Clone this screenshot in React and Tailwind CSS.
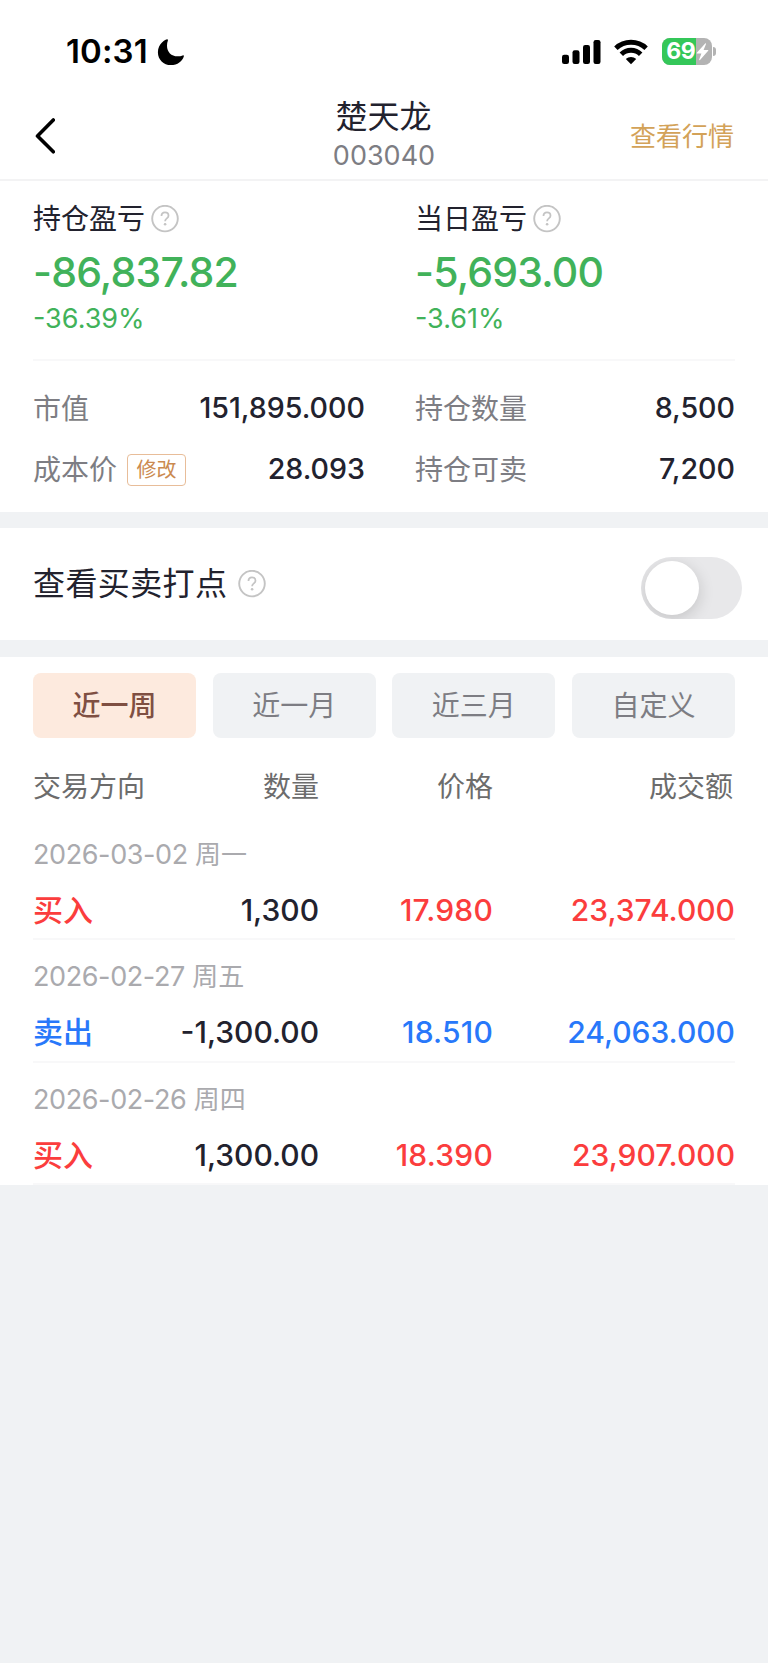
import React, { useState } from 'react';

const stats = [
  { label: '持仓盈亏', value: '-86,837.82', percent: '-36.39%' },
  { label: '当日盈亏', value: '-5,693.00', percent: '-3.61%' },
];

const ranges = ['近一周', '近一月', '近三月', '自定义'];

const trades = [
  { date: '2026-03-02', weekday: '周一', side: '买入', amount: '1,300', price: '17.980', total: '23,374.000' },
  { date: '2026-02-27', weekday: '周五', side: '卖出', amount: '-1,300.00', price: '18.510', total: '24,063.000' },
  { date: '2026-02-26', weekday: '周四', side: '买入', amount: '1,300.00', price: '18.390', total: '23,907.000' },
];

const HelpIcon = () => (
  <svg className="w-7 h-7 shrink-0" viewBox="0 0 28 28" fill="none" stroke="#c4c4c4" strokeWidth="1.9">
    <circle cx="14" cy="13.6" r="12.8" />
    <path d="M10.5 11.1c0-2.300 1.500-3.700 3.500-3.700s3.500 1.300 3.500 3.300c0 2.700-3.400 2.700-3.400 5.500" strokeWidth="1.8" />
    <circle cx="14.1" cy="19.2" r="1.3" fill="#c4c4c4" stroke="none" />
  </svg>
);

const StatusBar = () => (
  <div className="h-[90px] pt-[13px] pl-[66px] pr-[52px] flex items-center justify-between text-black">
    <div className="flex items-center gap-[9px]">
      <span className="pb-0.5 text-[33px] leading-[40px] font-semibold tracking-[0.1px]">10:31</span>
      <svg className="w-[28px] h-[28px]" viewBox="0 0 28 28">
        <path d="M10.2 1.2C9.6 .8 0.9 5 .9 14.2c0 7.4 5.6 12.9 13 12.9 6.600 0 11.500-4 12.900-8.700.2-.8-.4-1.300-1.100-1-1.600.7-3.300.9-5 .9-6.500 0-10.700-4.300-10.700-10.600 0-2 .3-3.700.9-5.200.2-.6 0-1.100-.7-1.300z" fill="currentColor" />
      </svg>
    </div>
    <div className="flex items-center">
      <svg className="w-[39px] h-[26px]" viewBox="0 0 39 26" fill="currentColor">
        <rect x="0" y="15.8" width="7" height="9.2" rx="2.2" />
        <rect x="10.500" y="11.2" width="7" height="13.800" rx="2.2" />
        <rect x="21" y="6" width="7" height="19" rx="2.2" />
        <rect x="31.500" y="1" width="7" height="24" rx="2.2" />
      </svg>
      <svg className="w-[34px] h-[26px] ml-[13px]" viewBox="0 0 34 26" fill="none" stroke="currentColor" strokeWidth="4.900">
        <path d="M1.900 9.200C10.200 1.200 23.800 1.200 32.100 9.200" />
        <path d="M7.300 15.200c5.400-5.300 14-5.300 19.400 0" />
        <path d="M17 25.200l-5.200-5.300c2.900-2.700 7.500-2.700 10.400 0z" fill="currentColor" stroke="none" />
      </svg>
      <div className="ml-[14px] w-[50px] h-[27px] rounded-[8px] overflow-hidden flex bg-[#b3b3b3] text-white">
        <div className="w-[34px] h-full bg-[#34c759] flex items-center justify-end">
          <span className="text-[23px] leading-[27px] font-bold tracking-[-0.3px]">69</span>
        </div>
        <svg className="w-[13px] h-[27px]" viewBox="0 0 13 27" fill="currentColor">
          <path d="M9.200 5.500L.8 14.800c-.3.400-.1.800.3.800h4.300L3.200 21.600c-.2.700.4 1 .8.500l8.200-9.400c.3-.4.1-.8-.3-.8H7.600L10 6c.2-.7-.4-1-.8-.5z" />
        </svg>
      </div>
      <div className="ml-[1.500px] w-[3px] h-[9px] rounded-r-full bg-[#b3b3b3]" />
    </div>
  </div>
);

const App = () => {
  const [range, setRange] = useState('近一周');
  const [showMarks, setShowMarks] = useState(false);

  return (
    <div className="w-full min-h-[1663px] bg-[#f0f2f4] text-[#22222e] font-['Inter','Noto_Sans_CJK_SC',sans-serif]">
      <div className="bg-white">
        <StatusBar />

        {/* Title bar */}
        <div className="h-[91px] border-b-2 border-[#f3f3f4] px-[33px] grid grid-cols-3 items-center">
          <svg className="mt-[3px] w-[22px] h-[36px]" viewBox="0 0 22 36" fill="none" stroke="#000" strokeWidth="3.600" strokeLinecap="round" strokeLinejoin="round">
            <path d="M20.300 2L4.500 18l15.800 15.800" />
          </svg>
          <div className="flex flex-col items-center">
            <h1 className="pr-px text-[32px] leading-[42px] font-normal">楚天龙</h1>
            <span className="text-[27px] leading-[35px] text-[#7d7d83]">003040</span>
          </div>
          <a className="mt-1 pr-px text-[26px] leading-[36px] text-right text-[#d3a258]">查看行情</a>
        </div>

        {/* Profit and loss */}
        <div className="px-[33px]">
          <div className="h-[180px] pt-[18px] flex border-b-2 border-[#f8f8f9]">
            {stats.map((s) => (
              <div key={s.label} className="first:w-[382px]">
                <div className="flex items-center gap-[6px] h-[40px]">
                  <span className="text-[28px] leading-[40px]">{s.label}</span>
                  <HelpIcon />
                </div>
                <p className="h-[66px] text-[41px] leading-[66px] font-medium tracking-[-0.8px] text-[#41b25a]">{s.value}</p>
                <p className="text-[27px] leading-[28px] text-[#41b25a]">{s.percent}</p>
              </div>
            ))}
          </div>

          <div className="h-[151px] pt-[17px] flex gap-[50px]">
            <div className="w-[332px]">
              <div className="h-[61px] flex items-center justify-between">
                <span className="text-[28px] text-[#7d7d83]">市值</span>
                <span className="text-[28.600px] font-medium">151,895.000</span>
              </div>
              <div className="h-[61px] flex items-center">
                <span className="text-[28px] text-[#7d7d83]">成本价</span>
                <button className="ml-[10px] w-[59px] h-[32px] rounded border border-[#e8bd99] text-[20px] leading-[30px] text-[#cb8a50]">修改</button>
                <span className="ml-auto text-[28.600px] font-medium">28.093</span>
              </div>
            </div>
            <div className="flex-1">
              <div className="h-[61px] flex items-center justify-between">
                <span className="text-[28px] text-[#7d7d83]">持仓数量</span>
                <span className="text-[28.600px] font-medium">8,500</span>
              </div>
              <div className="h-[61px] flex items-center justify-between">
                <span className="text-[28px] text-[#7d7d83]">持仓可卖</span>
                <span className="text-[28.600px] font-medium">7,200</span>
              </div>
            </div>
          </div>
        </div>
      </div>

      {/* Trade marks switch */}
      <div className="mt-4 h-[112px] bg-white pl-[33px] pr-[26px] flex items-center justify-between">
        <div className="flex items-center gap-[11px]">
          <span className="text-[32px] leading-[44px] tracking-[0.400px]">查看买卖打点</span>
          <HelpIcon />
        </div>
        <button
          onClick={() => setShowMarks(!showMarks)}
          className={`mt-2 w-[101px] h-[62px] p-1 rounded-full overflow-hidden flex items-center ${showMarks ? 'justify-end bg-[#34c759]' : 'bg-[#e8e8ea]'}`}
        >
          <span className="w-[54px] h-[54px] rounded-full bg-white shadow-[0_4px_16px_rgba(0,0,0,0.16)]" />
        </button>
      </div>

      {/* Trade history */}
      <div className="mt-[17px] pt-4 px-[33px] bg-white">
        <div className="grid grid-cols-4 gap-[16.700px]">
          {ranges.map((r) => (
            <button
              key={r}
              onClick={() => setRange(r)}
              className={`h-[65px] rounded-lg text-[28px] ${r === range ? 'bg-[#fdeade] text-[#7f4f42] font-medium' : 'bg-[#f0f2f4] text-[#7d7d83]'}`}
            >
              {r}
            </button>
          ))}
        </div>

        <div className="h-[80px] pt-[17px] flex items-center text-[28px] text-[#6c6c6c]">
          <span className="w-[142px]">交易方向</span>
          <span className="w-[144px] text-right">数量</span>
          <span className="w-[174px] text-right">价格</span>
          <span className="flex-1 pr-0.5 text-right">成交额</span>
        </div>

        {trades.map((t) => (
          <div key={t.date} className="h-[122.300px] pt-[19px] border-b-2 border-[#f8f8f9]">
            <p className="h-[36px] text-[26px] leading-[36px] text-[#aaaaae]">
              <span className="text-[27px] tracking-[-0.400px]">{t.date}</span> {t.weekday}
            </p>
            <div className="h-[75px] flex items-center text-[30px] font-medium">
              <span className={`w-[122px] ${t.side === '买入' ? 'text-[#fb3d3d]' : 'text-[#2878fa]'}`}>{t.side}</span>
              <span className="w-[164px] text-right">{t.amount}</span>
              <span className={`w-[174px] text-right tracking-[0.2px] ${t.side === '买入' ? 'text-[#fb3d3d]' : 'text-[#2878fa]'}`}>{t.price}</span>
              <span className={`flex-1 text-right ${t.side === '买入' ? 'text-[#fb3d3d]' : 'text-[#2878fa]'}`}>{t.total}</span>
            </div>
          </div>
        ))}
      </div>
    </div>
  );
};

export default App;
